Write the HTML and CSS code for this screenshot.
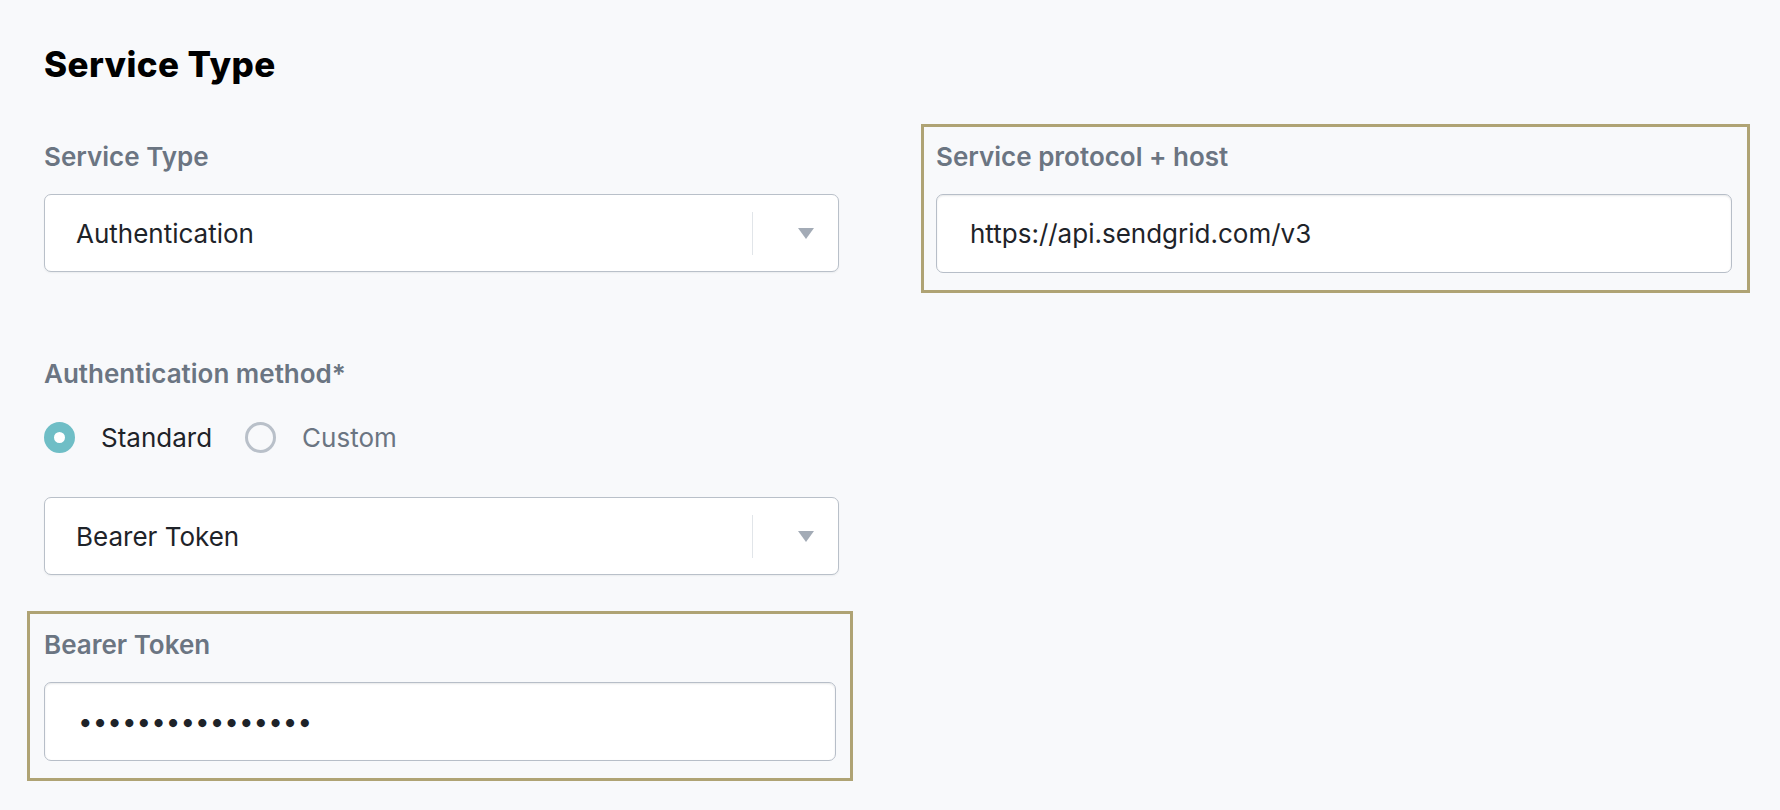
FILE: index.html
```html
<!DOCTYPE html>
<html lang="en">
<head>
  <meta charset="UTF-8">
  <title>Service Type</title>

  <link rel="stylesheet" href="styles.css">
</head>

<body>
  <div class="page">
    <h1 class="title">Service Type</h1>

    <div class="columns">
      <div class="column">
        <div class="field">
          <label class="label">Service Type</label>
          <div class="select">
            <span class="select-value">Authentication</span>
            <span class="select-sep"></span>
            <span class="select-arrow"></span>
          </div>
        </div>

        <div class="field field-auth">
          <label class="label">Authentication method*</label>
          <div class="radios">
            <label class="radio radio-on"><span class="dot"></span>Standard</label>
            <label class="radio"><span class="dot"></span>Custom</label>
          </div>
          <div class="select">
            <span class="select-value">Bearer Token</span>
            <span class="select-sep"></span>
            <span class="select-arrow"></span>
          </div>
        </div>

        <div class="field field-token highlight highlight-left">
          <label class="label" for="token">Bearer Token</label>
          <input class="input input-secret" id="token" type="password" value="sendgridtoken123">
        </div>
      </div>

      <div class="column">
        <div class="field highlight highlight-right">
          <label class="label" for="host">Service protocol + host</label>
          <input class="input" id="host" type="text" value="https://api.sendgrid.com/v3">
        </div>
      </div>
    </div>
  </div>
</body>
</html>
```

FILE: styles.css
```css
* {
  margin: 0;
  padding: 0;
  box-sizing: border-box;
}

body {
  background: #f8f9fb;
  color: #1e2329;
  font-family: Inter, 'Noto Sans', sans-serif;
}

.page {
  padding: 44px 0 0 44px;
}

.title {
  font-size: 35px;
  line-height: 40px;
  font-weight: 800;
  letter-spacing: 0.4px;
  color: #000;
}

.columns {
  display: flex;
  gap: 97px;
  margin-top: 58px;
}

.column {
  width: 795px;
}

.label {
  display: block;
  font-size: 26px;
  line-height: 30px;
  font-weight: 600;
  color: #6b7582;
  margin-bottom: 22px;
}

/*
  custom select, react-select look
*/

.select {
  height: 78px;
  display: flex;
  align-items: center;
  background: #fff;
  border: 1.5px solid #b9c0c9;
  border-radius: 7px;
  box-shadow: 0 1px 2px rgba(20, 30, 40, 0.06);
  padding-left: 31px;
  font-size: 26px;
}

.select-value {
  flex: 1;
}

.select-sep {
  width: 1.5px;
  height: 43px;
  background: #e1e5e9;
}

.select-arrow {
  width: 0;
  height: 0;
  margin: 0 24px 0 45px;
  border-left: 8.5px solid transparent;
  border-right: 8.5px solid transparent;
  border-top: 11px solid #a3abb6;
}

.field-auth {
  margin-top: 87px;
}

.radios {
  display: flex;
  align-items: center;
  margin: 32px 0 44px;
  height: 32px;
}

.radio {
  display: flex;
  align-items: center;
  gap: 26px;
  font-size: 26px;
  color: #6b7582;
  margin-right: 33px;
}

.radio-on {
  color: #1e2329;
}

.dot {
  width: 31px;
  height: 31px;
  border-radius: 50%;
  border: 3px solid #b9c0c9;
}

.radio-on .dot {
  border: 10px solid #6fbec6;
  background: #fff;
}

.field-token {
  margin-top: 55px;
}

.input {
  display: block;
  width: 100%;
  height: 79px;
  background: #fff;
  border: 1.5px solid #b7bec8;
  border-radius: 7px;
  box-shadow: inset 0 1px 2px rgba(20, 30, 40, 0.1);
  padding-left: 33px;
  font-family: Inter, 'Noto Sans', sans-serif;
  font-size: 26px;
  color: #1e2329;
  outline: none;
}

.input-secret {
  letter-spacing: 0;
}

/* annotation frames */

.highlight {
  border: 3px solid #afa374;
}

.highlight-left {
  margin: 36px -14px 0 -17px;
  padding: 16px 14px 17px 14px;
}

.highlight-right {
  margin: -18px -19px 0 -15px;
  padding: 15px 15px 17px 12px;
}
```
